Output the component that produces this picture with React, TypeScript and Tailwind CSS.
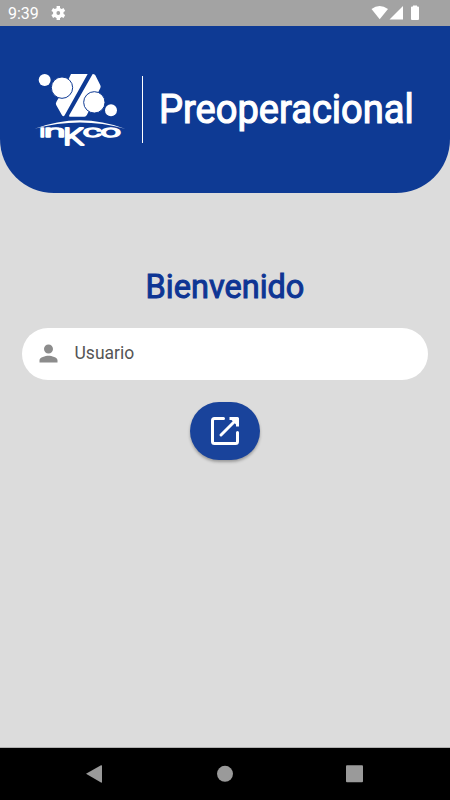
import { MdPerson } from "react-icons/md";

function InkcoLogo() {
  return (
    <svg
      className="h-[95px] w-[130px] shrink-0"
      viewBox="0 0 390 285"
      fill="white"
      role="img"
      aria-label="inkco"
    >
      {/* Cuerpo central partido por la diagonal */}
      <path d="M138 42H188L119 166Q115 172 111 166L94 136Q91 131 94 126L120 80Z" />
      <path d="M203 42Q208 42 211 46L226 76Q228 80 226 84L186 164Q183 170 178 170H135Q130 170 133 165Z" />

      {/* Circulos */}
      <g className="stroke-[#0e3a94]" strokeWidth="3">
        <circle cx="111" cy="83" r="32" />
        <circle cx="208" cy="127" r="32" />
      </g>
      <circle cx="59" cy="60" r="18" />
      <circle cx="258" cy="151" r="18" />

      <path d="M29 206Q165 155 300 206Q165 169 29 206Z" />

      <g
        className="font-[Roboto,sans-serif] font-light"
        fontSize="52"
        stroke="white"
        strokeWidth="4.500"
        strokeLinejoin="round"
      >
        <text x="43" y="230" textLength="18" lengthAdjust="spacingAndGlyphs">ı</text>
        <text x="57" y="230" textLength="64" lengthAdjust="spacingAndGlyphs">n</text>
        <text x="115" y="256" fontSize="70" strokeWidth="6" textLength="62" lengthAdjust="spacingAndGlyphs">K</text>
        <text x="174" y="230" textLength="56" lengthAdjust="spacingAndGlyphs">c</text>
        <text x="227" y="230" textLength="60" lengthAdjust="spacingAndGlyphs">o</text>
      </g>
    </svg>
  );
}

function GearIcon() {
  return (
    <svg className="size-4" viewBox="0 0 16 16" fill="none" stroke="white">
      <circle cx="8.300" cy="8" r="3.600" strokeWidth="3.400" />
      <path
        d="M8.300 1V3.500M8.300 12.500V15M2.240 4.500L4.400 5.750M12.200 10.250L14.360 11.500M2.240 11.500L4.400 10.250M12.200 5.750L14.360 4.500"
        strokeWidth="3.400"
      />
    </svg>
  );
}

function StatusBar() {
  return (
    <div className="flex h-[26px] items-center bg-[#a3a3a3] text-white">
      <span className="w-[50px] pt-[2px] pl-[8px] text-[16px] leading-[24px]">9:39</span>
      <GearIcon />
      <svg className="ml-auto h-[26px] w-[90px]" viewBox="0 0 90 26" fill="white">
        <path d="M11.500 9Q19.500 3 28 9L19.700 19.300Z" />
        <path d="M43 6V19.500H29.500Z" />
        <path d="M53 6.500V5.500H57V6.500H58Q59 6.500 59 7.500V19Q59 20 58 20H52Q51 20 51 19V7.500Q51 6.500 52 6.500Z" />
      </svg>
    </div>
  );
}

function Header() {
  return (
    <header className="flex h-[166.5px] items-start rounded-b-[54px] bg-[#0e3a94] pt-[34px] pl-[25px]">
      <InkcoLogo />
      <div className="-ml-[13px] mt-[16px] h-[67px] w-px shrink-0 bg-white" />
      <h1 className="ml-[16px] mt-[25px] origin-center scale-y-[1.05] whitespace-nowrap text-[38.100px] leading-[48px] text-white [-webkit-text-stroke:1.100px_white]">
        Preoperacional
      </h1>
    </header>
  );
}

function NavigationBar() {
  return (
    <nav className="h-[52px] bg-black">
      <svg className="block h-[52px] w-[450px]" viewBox="0 0 450 52" fill="#9a9a9a">
        <path d="M86 25.800L101 17.300Q102 17 102 18V34Q102 35 101 34.500Z" />
        <circle cx="225" cy="25.800" r="8" />
        <rect x="346" y="17.300" width="17" height="17" rx="1" />
      </svg>
    </nav>
  );
}

export default function App() {
  return (
    <div className="flex h-[800px] w-[450px] flex-col overflow-hidden bg-[#dcdcdc] font-[Roboto,sans-serif]">
      <StatusBar />
      <Header />

      <main className="flex flex-1 flex-col items-center border-b border-[#b0b0b0] px-[22px] pt-[74.5px]">
        <h2 className="scale-y-[1.04] text-[32.5px] leading-[40px] text-[#0e3594] [-webkit-text-stroke:1px_#0e3594]">
          Bienvenido
        </h2>

        <label className="mt-[20.5px] flex h-[52.5px] w-full items-center rounded-full bg-white pl-[12.5px]">
          <MdPerson className="size-[27px] shrink-0 text-[#8c8c8c]" />
          <input
            className="ml-[13px] w-[300px] bg-transparent pb-[2px] text-[17.500px] text-[#555] outline-none placeholder:text-[#555] placeholder:opacity-100"
            placeholder="Usuario"
          />
        </label>

        <button
          className="mt-[22px] flex h-[58px] w-[70px] items-center justify-center rounded-[29px] bg-[#19439b] shadow-[0_2px_3px_rgba(0,0,0,0.3)]"
          aria-label="Ingresar"
        >
          <svg
            className="size-[30px]"
            viewBox="0 0 30 30"
            fill="none"
            stroke="white"
            strokeWidth="3"
            strokeLinecap="round"
            strokeLinejoin="round"
          >
            <path d="M13.500 2.500H4.500Q2.500 2.500 2.500 4.500V25.500Q2.500 27.500 4.500 27.500H25.500Q27.500 27.500 27.500 25.500V16.500" />
            <path d="M27 3L11 19" />
            <path d="M19.500 2.500H27.500V10.500" strokeLinecap="butt" />
            <path d="M20 2.500H27.500V10Z" fill="white" stroke="none" />
          </svg>
        </button>
      </main>

      <NavigationBar />
    </div>
  );
}
